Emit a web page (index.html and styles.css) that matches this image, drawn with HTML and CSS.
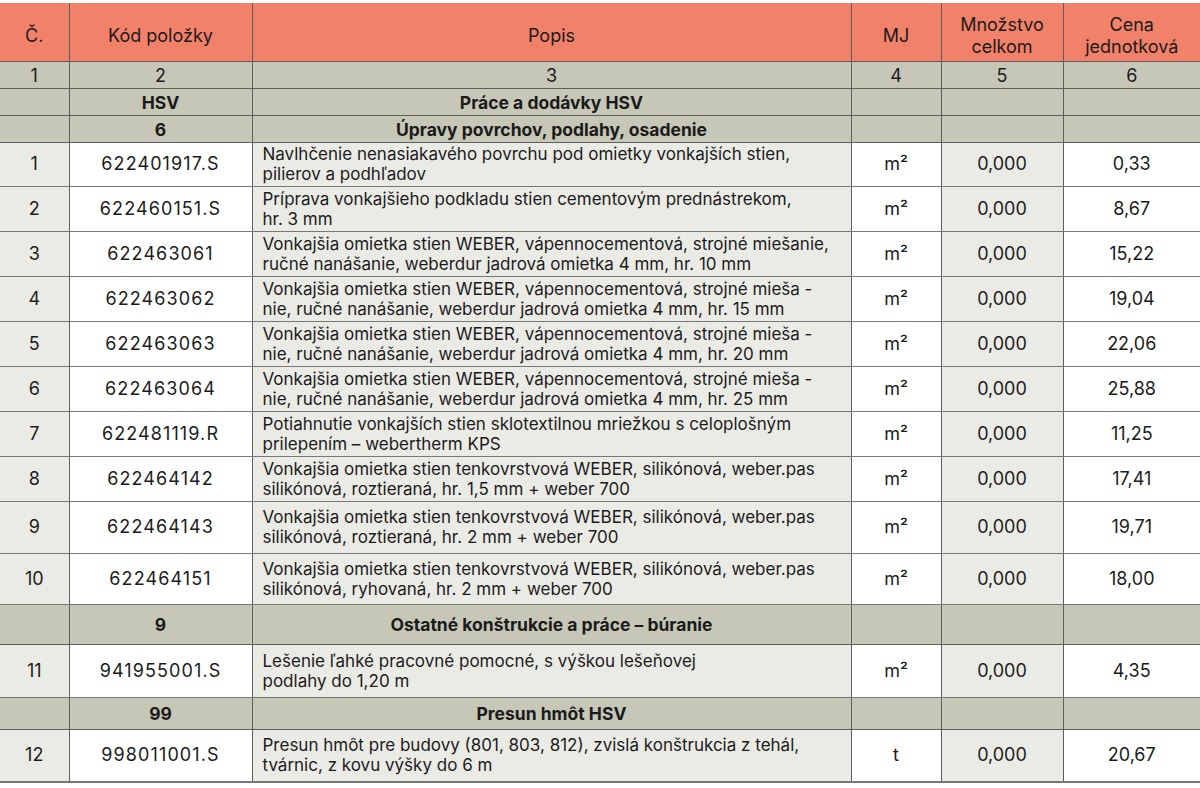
FILE: index.html
```html
<!DOCTYPE html>
<html lang="sk">
<head>
<meta charset="utf-8">
<title>Výkaz výmer</title>
<link rel="stylesheet" href="styles.css">
</head>
<body>
<table class="bill">
  <colgroup>
    <col class="c1"><col class="c2"><col class="c3"><col class="c4"><col class="c5"><col class="c6">
  </colgroup>
  <thead>
    <tr class="head">
      <th>Č.</th><th>Kód položky</th><th>Popis</th><th>MJ</th><th>Množstvo<br>celkom</th><th>Cena<br>jednotková</th>
    </tr>
  </thead>
  <tbody>
    <tr class="band idx"><td>1</td><td>2</td><td>3</td><td>4</td><td>5</td><td>6</td></tr>
    <tr class="band sec"><td></td><td>HSV</td><td>Práce a dodávky HSV</td><td></td><td></td><td></td></tr>
    <tr class="band sec"><td></td><td>6</td><td>Úpravy povrchov, podlahy, osadenie</td><td></td><td></td><td></td></tr>

    <tr class="item h44"><td>1</td><td class="code">622401917.S</td><td class="desc">Navlhčenie nenasiakavého povrchu pod omietky vonkajších stien,<br>pilierov a podhľadov</td><td>m²</td><td>0,000</td><td>0,33</td></tr>
    <tr class="item h45"><td>2</td><td class="code">622460151.S</td><td class="desc">Príprava vonkajšieho podkladu stien cementovým prednástrekom,<br>hr. 3 mm</td><td>m²</td><td>0,000</td><td>8,67</td></tr>
    <tr class="item h45"><td>3</td><td class="code">622463061</td><td class="desc">Vonkajšia omietka stien WEBER, vápennocementová, strojné miešanie,<br>ručné nanášanie, weberdur jadrová omietka 4 mm, hr. 10 mm</td><td>m²</td><td>0,000</td><td>15,22</td></tr>
    <tr class="item h45"><td>4</td><td class="code">622463062</td><td class="desc">Vonkajšia omietka stien WEBER, vápennocementová, strojné mieša -<br>nie, ručné nanášanie, weberdur jadrová omietka 4 mm, hr. 15 mm</td><td>m²</td><td>0,000</td><td>19,04</td></tr>
    <tr class="item h45"><td>5</td><td class="code">622463063</td><td class="desc">Vonkajšia omietka stien WEBER, vápennocementová, strojné mieša -<br>nie, ručné nanášanie, weberdur jadrová omietka 4 mm, hr. 20 mm</td><td>m²</td><td>0,000</td><td>22,06</td></tr>
    <tr class="item h45"><td>6</td><td class="code">622463064</td><td class="desc">Vonkajšia omietka stien WEBER, vápennocementová, strojné mieša -<br>nie, ručné nanášanie, weberdur jadrová omietka 4 mm, hr. 25 mm</td><td>m²</td><td>0,000</td><td>25,88</td></tr>
    <tr class="item h45"><td>7</td><td class="code">622481119.R</td><td class="desc">Potiahnutie vonkajších stien sklotextilnou mriežkou s celoplošným<br>prilepením – webertherm KPS</td><td>m²</td><td>0,000</td><td>11,25</td></tr>
    <tr class="item h45"><td>8</td><td class="code">622464142</td><td class="desc">Vonkajšia omietka stien tenkovrstvová WEBER, silikónová, weber.pas<br>silikónová, roztieraná, hr. 1,5 mm + weber 700</td><td>m²</td><td>0,000</td><td>17,41</td></tr>
    <tr class="item h52"><td>9</td><td class="code">622464143</td><td class="desc">Vonkajšia omietka stien tenkovrstvová WEBER, silikónová, weber.pas<br>silikónová, roztieraná, hr. 2 mm + weber 700</td><td>m²</td><td>0,000</td><td>19,71</td></tr>
    <tr class="item h51"><td>10</td><td class="code">622464151</td><td class="desc">Vonkajšia omietka stien tenkovrstvová WEBER, silikónová, weber.pas<br>silikónová, ryhovaná, hr. 2 mm + weber 700</td><td>m²</td><td>0,000</td><td>18,00</td></tr>

    <tr class="band sec h40"><td></td><td>9</td><td>Ostatné konštrukcie a práce – búranie</td><td></td><td></td><td></td></tr>
    <tr class="item h53"><td>11</td><td class="code">941955001.S</td><td class="desc">Lešenie ľahké pracovné pomocné, s výškou lešeňovej<br>podlahy do 1,20 m</td><td>m²</td><td>0,000</td><td>4,35</td></tr>
    <tr class="band sec h32"><td></td><td>99</td><td>Presun hmôt HSV</td><td></td><td></td><td></td></tr>
    <tr class="item h52 last"><td>12</td><td class="code">998011001.S</td><td class="desc">Presun hmôt pre budovy (801, 803, 812), zvislá konštrukcia z tehál,<br>tvárnic, z kovu výšky do 6 m</td><td>t</td><td>0,000</td><td>20,67</td></tr>
  </tbody>
</table>
</body>
</html>
```

FILE: styles.css
```css
html, body {
  margin: 0;
  padding: 0;
  background: #ffffff;
}
body {
  padding-top: 3px;
  font-family: Inter, "Liberation Sans", sans-serif;
  color: #1b1b1b;
}
.bill {
  width: 1200px;
  border-collapse: collapse;
  table-layout: fixed;
  font-size: 18px;
}
.c1 { width: 69px; }
.c2 { width: 183px; }
.c3 { width: 599px; }
.c4 { width: 90px; }
.c5 { width: 122px; }
.c6 { width: 137px; }

.bill th, .bill td {
  padding: 0;
  text-align: center;
  vertical-align: middle;
  border: 1px solid #5d5d5d;
  line-height: 20px;
}
.bill tr > :first-child { border-left: none; }
.bill tr > :last-child { border-right: none; }

.head th {
  background: #f2816a;
  font-weight: 400;
  height: 58px;
  line-height: 22px;
  padding-top: 8px;
  box-sizing: border-box;
  border-top: none;
}
.band td {
  background: #c6c7b7;
  height: 24px;
  padding-top: 2px;
}
.band.h40 td { height: 37px; }
.band.h32 td { height: 29px; }
.sec td {
  font-weight: 700;
  font-size: 17.5px;
}

.item td { background: #ffffff; }
.item td:nth-child(1),
.item td:nth-child(3),
.item td:nth-child(5) { background: #ebebe6; }

.item td { border-top-color: #777; border-bottom-color: #777; }

.code {
  letter-spacing: 1.1px;
}
.desc {
  text-align: left !important;
  padding-left: 10px !important;
  white-space: nowrap;
  font-size: 17px;
}

.item.h44 td { height: 43px; }
.item.h45 td { height: 44px; }
.item.h51 td { height: 50px; }
.item.h52 td { height: 51px; }
.item.h53 td { height: 52px; }
.last td { border-bottom: 2px solid #777; }
```
